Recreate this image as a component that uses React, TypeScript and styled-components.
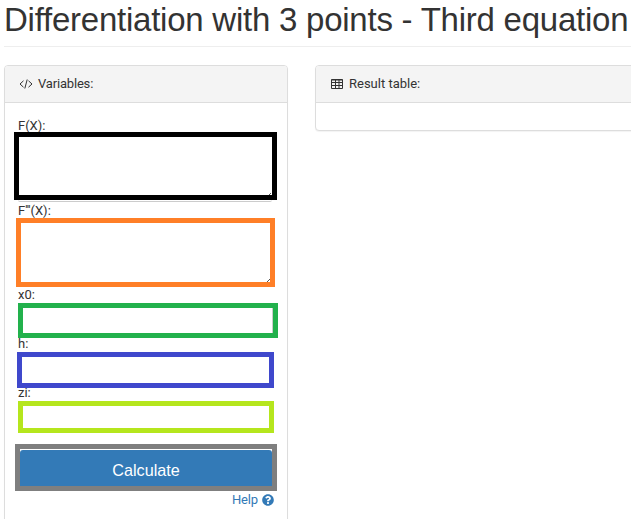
import React from "react";
import styled, { createGlobalStyle } from "styled-components";
import { FaQuestionCircle } from "react-icons/fa";

const GlobalStyle = createGlobalStyle`
  * { box-sizing: border-box; }
  html, body { margin: 0; height: 519px; overflow: hidden; background: #fff; }
  body { font: 13px/18px Roboto, sans-serif; color: #333; }
`;

const Page = styled.main`
  width: 631px;
  height: 519px;
  padding-left: 4px;
  overflow: hidden;
`;

const Title = styled.h1`
  margin: 0 0 18px;
  height: 47px;
  border-bottom: 1px solid #eee;
  font: 400 33px/40px "Liberation Sans", Arial, sans-serif;
  letter-spacing: -0.24px;
  white-space: nowrap;
`;

const Columns = styled.div`
  display: grid;
  grid-template-columns: 284px 340px;
  column-gap: 27px;
  align-items: start;
`;

const Panel = styled.section<{ $height: number }>`
  height: ${(p) => p.$height}px;
  border: 1px solid #ddd;
  border-radius: 4px;
  background: #fff;
  box-shadow: 0 1px 1px rgba(0, 0, 0, 0.05);
`;

const PanelHeader = styled.header<{ $tracking?: number }>`
  display: flex;
  align-items: center;
  gap: 5px;
  height: 37px;
  padding: 0 0 1px 14px;
  border-bottom: 1px solid #ddd;
  border-radius: 3px 3px 0 0;
  background: #f4f4f4;
  letter-spacing: ${(p) => p.$tracking ?? 0}px;
`;

const PanelIcon = styled.svg`
  display: block;
  width: 14px;
  height: 12px;
  fill: none;
  stroke: #333;
`;

const Form = styled.div`
  display: flex;
  flex-direction: column;
  align-items: flex-start;
`;

const Label = styled.label<{ $gap: number }>`
  margin: ${(p) => p.$gap}px 0 0 13px;
  height: 18px;
  letter-spacing: -0.02px;
`;

const Frame = styled.div<{
  $color: string;
  $left: number;
  $width: number;
  $height: number;
  $lift: number;
}>`
  position: relative;
  width: ${(p) => p.$width}px;
  height: ${(p) => p.$height}px;
  margin: ${(p) => -p.$lift}px 0 0 ${(p) => p.$left}px;
  border: 5px solid ${(p) => p.$color};
  background: #fff;
`;

const TextArea = styled.textarea`
  display: block;
  width: 100%;
  height: 100%;
  padding: 4px;
  border: 0;
  outline: 0;
  resize: none;
  background: transparent;
  font: inherit;
`;

const Input = styled.input<{ $edge?: boolean }>`
  display: block;
  width: 100%;
  height: 100%;
  padding: 4px;
  border: 0;
  border-right: ${(p) => (p.$edge ? "1px solid #ccc" : "0")};
  outline: 0;
  background: transparent;
  font: inherit;
`;

const Grip = styled.svg`
  position: absolute;
  right: 0;
  bottom: 0;
  width: 3px;
  height: 3px;
  fill: #555;
`;

const FieldEdge = styled.div`
  width: 254px;
  height: 2px;
  margin-left: 13px;
  border-bottom: 1px solid #ccc;
  border-radius: 0 0 4px 4px;
`;

const Button = styled.button`
  display: block;
  width: 100%;
  height: 36px;
  margin-top: 1px;
  padding: 4px 0 0;
  border: 0;
  border-radius: 3px 3px 0 0;
  background: #337ab7;
  color: #fff;
  font: 16.2px/32px "Liberation Sans", Arial, sans-serif;
`;

const Help = styled.a`
  display: flex;
  align-items: center;
  align-self: flex-end;
  gap: 4px;
  margin-right: 13px;
  height: 18px;
  color: #337ab7;
  font-size: 13px;
  letter-spacing: -0.15px;
  text-decoration: none;
`;

function ResizeGrip({ size }: { size: number }) {
  return (
    <Grip viewBox="0 0 3 3" shapeRendering="crispEdges">
      <path d={size === 3 ? "M0 2h1v1H0zM1 1h1v1H1zM2 0h1v1H2z" : "M0 2h1v1H0zM1 1h1v1H1z"} />
    </Grip>
  );
}

export default function App() {
  return (
    <>
      <GlobalStyle />
      <Page>
        <Title>Differentiation with 3 points - Third equation</Title>
        <Columns>
          <Panel $height={480}>
            <PanelHeader $tracking={-0.18}>
              <PanelIcon viewBox="0 0 14 12">
                <path d="M4.5 2.8 1 6l3.5 3.2M9.5 2.8 13 6 9.5 9.2M8.2 1.5 5.8 10.5" />
              </PanelIcon>
              Variables:
            </PanelHeader>
            <Form>
              <Label $gap={14} htmlFor="fx">F(X):</Label>
              <Frame $color="#000" $left={9} $width={263} $height={68} $lift={3}>
                <TextArea id="fx" />
                <ResizeGrip size={2} />
              </Frame>
              <FieldEdge />
              <Label $gap={0} htmlFor="f3x">F'''(X):</Label>
              <Frame $color="#ff7f27" $left={11} $width={259} $height={69} $lift={2}>
                <TextArea id="f3x" />
                <ResizeGrip size={3} />
              </Frame>
              <Label $gap={-1} htmlFor="x0">x0:</Label>
              <Frame $color="#22b14c" $left={13} $width={260} $height={35} $lift={1}>
                <Input id="x0" $edge />
              </Frame>
              <Label $gap={-3} htmlFor="h">h:</Label>
              <Frame $color="#3f48cc" $left={12} $width={257} $height={36} $lift={1}>
                <Input id="h" />
              </Frame>
              <Label $gap={-4} htmlFor="zi">zi:</Label>
              <Frame $color="#b5e61d" $left={13} $width={256} $height={32} $lift={1}>
                <Input id="zi" />
              </Frame>
              <Frame $color="#7f7f7f" $left={10} $width={262} $height={47} $lift={-11}>
                <Button type="button">Calculate</Button>
              </Frame>
              <Help href="#">
                Help <FaQuestionCircle size={12} />
              </Help>
            </Form>
          </Panel>
          <Panel $height={66}>
            <PanelHeader>
              <PanelIcon viewBox="0 0 14 12">
                <path d="M1.5 1.5h11v9h-11zM1.5 2h11M1.5 4.5h11M1.5 7.5h11M5.5 1.5v9M9 1.5v9" />
              </PanelIcon>
              Result table:
            </PanelHeader>
          </Panel>
        </Columns>
      </Page>
    </>
  );
}
